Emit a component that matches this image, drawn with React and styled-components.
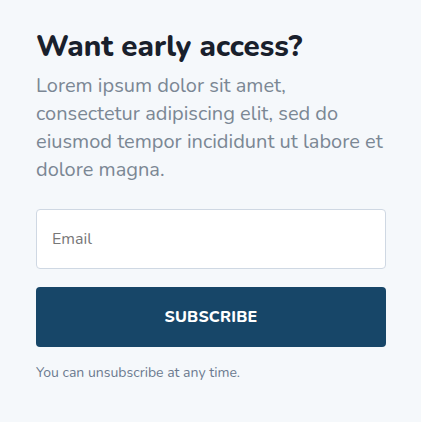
import React from "react";
import styled, { createGlobalStyle } from "styled-components";

const Global = createGlobalStyle`
  html, body { margin: 0; padding: 0; background: #f5f8fb; }
  body { font-family: "Nunito", "Lato", "Noto Sans", sans-serif; }
`;

const Page = styled.div`
  width: 421px;
  height: 422px;
  box-sizing: border-box;
  padding: 26px 35px 0 36px;
  background: #f5f8fb;
`;

const Title = styled.h2`
  margin: 0;
  font-size: 29.5px;
  line-height: 40px;
  font-weight: 800;
  color: #19202c;
`;

const Lead = styled.p`
  margin: 6px 0 0;
  font-size: 20px;
  line-height: 28px;
  color: #7b8794;
`;

const Form = styled.form`
  display: flex;
  flex-direction: column;
  gap: 18px;
  margin-top: 25px;
`;

const Input = styled.input`
  box-sizing: border-box;
  width: 100%;
  height: 60px;
  padding: 0 15px;
  border: 1px solid #cfd8e3;
  border-radius: 4px;
  background: #fff;
  font-family: inherit;
  font-size: 16px;
  color: #333;
  outline: none;
  &::placeholder { color: #777; font-size: 16px; }
`;

const Button = styled.button`
  height: 60px;
  border: 0;
  border-radius: 4px;
  background: #174668;
  color: #fff;
  font-family: inherit;
  font-size: 16px;
  font-weight: 800;
  letter-spacing: 0.2px;
  cursor: pointer;
`;

const Note = styled.p`
  margin: 16px 0 0;
  font-size: 14px;
  line-height: 20px;
  color: #6b7a8f;
`;

export default function App() {
  return (
    <>
      <Global />
      <Page>
        <Title>Want early access?</Title>
        <Lead>
          Lorem ipsum dolor sit amet, consectetur adipiscing elit, sed do eiusmod tempor incididunt ut labore et dolore magna.
        </Lead>
        <Form onSubmit={(e) => e.preventDefault()}>
          <Input type="email" placeholder="Email" />
          <Button type="submit">SUBSCRIBE</Button>
        </Form>
        <Note>You can unsubscribe at any time.</Note>
      </Page>
    </>
  );
}
